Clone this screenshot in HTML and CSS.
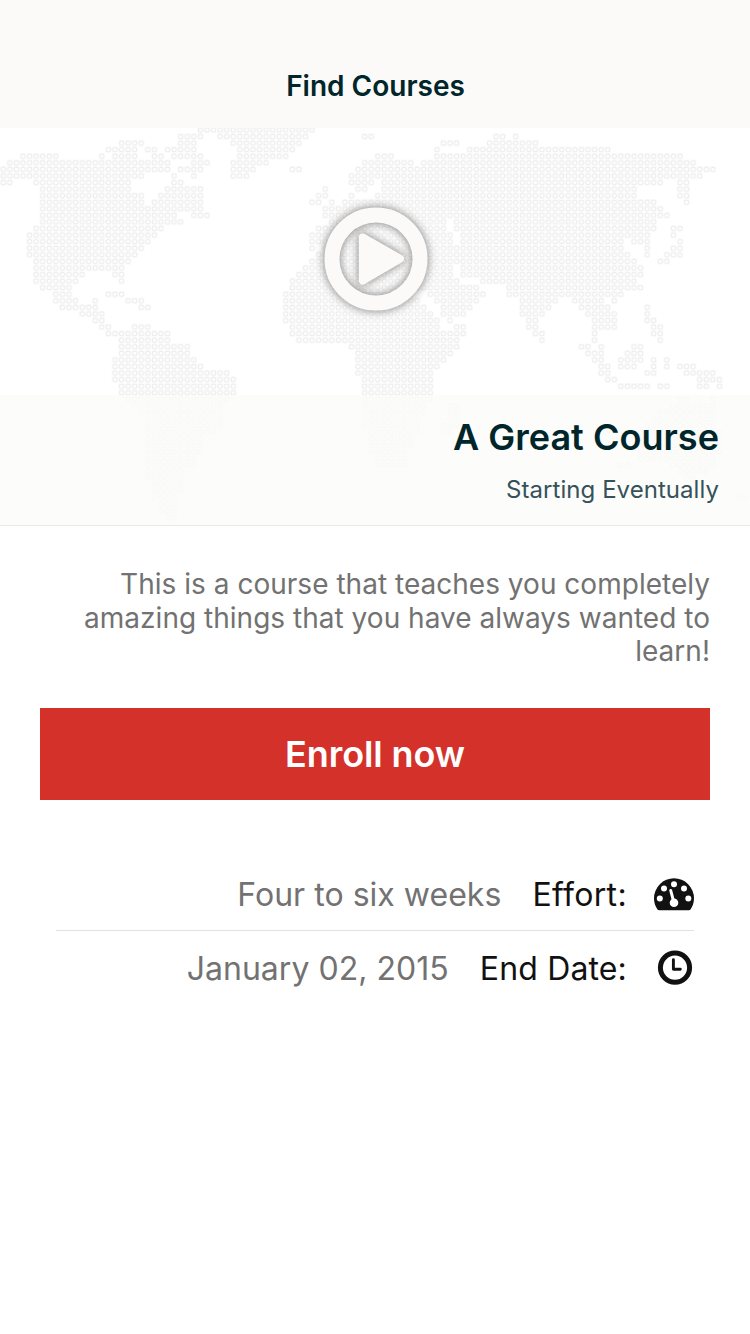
FILE: index.html
```html
<!DOCTYPE html>
<html lang="en">
<head>
<meta charset="utf-8">
<title>Find Courses</title>
<link rel="stylesheet" href="styles.css">
</head>
<body>
<header class="navbar"><h1 class="navbar-title">Find Courses</h1></header>
<section class="hero">
  <svg class="map" width="750" height="398" viewBox="0 0 750 398" aria-hidden="true">
    <defs>
      <pattern id="dot" width="6.57" height="6.57" patternUnits="userSpaceOnUse" patternTransform="translate(0 -1.3)">
        <rect width="6.57" height="6.57" fill="#fdfdfd"/>
        <circle cx="3.28" cy="3.28" r="2.2" fill="#fefefe" stroke="#ededed" stroke-width="1"/>
      </pattern>
    </defs>
    <path id="land" fill="url(#dot)"/>
  </svg>
  <svg class="play" width="130" height="130" viewBox="-65 -65 130 130" role="img" aria-label="Play">
    <circle r="44" fill="none" stroke="#fbfaf8" stroke-width="15"/>
    <path d="M-13.2 -21.5L24 -.2L-13.2 21.5Z" fill="#fbfaf8" stroke="#fbfaf8" stroke-width="8" stroke-linejoin="round"/>
  </svg>
  <div class="caption">
    <h2 class="course-title">A Great Course</h2>
    <p class="course-start">Starting Eventually</p>
  </div>
</section>
<main class="content">
  <p class="blurb">This is a course that teaches you completely amazing things that you have always wanted to learn!</p>
  <button class="enroll" type="button">Enroll now</button>
  <ul class="facts">
    <li class="fact">
      <span class="value">Four to six weeks</span><span class="label">Effort:</span>
      <svg class="icon" width="42" height="42" viewBox="0 0 42 42" aria-hidden="true">
        <path d="M4.5 35.5C2.4 32.3 1 29 1 24.3A20 20 0 0 1 41 24.3C41 29 39.6 32.3 37.5 35.5Q37 36.3 35.7 36.3H6.3Q5 36.3 4.5 35.5Z" fill="#111"/>
        <g fill="#fff"><circle cx="6.8" cy="24.4" r="3"/><circle cx="11" cy="14.4" r="3"/><circle cx="21" cy="10.2" r="3"/><circle cx="31" cy="14.4" r="3"/><circle cx="35.3" cy="24.4" r="3"/><circle cx="21" cy="28.7" r="4.3"/></g>
        <path d="M17.7 16.5L20.8 28" stroke="#fff" stroke-width="2.9" stroke-linecap="round"/>
      </svg>
    </li>
    <li class="fact">
      <span class="value">January 02, 2015</span><span class="label date-label">End Date:</span>
      <svg class="icon" width="42" height="42" viewBox="0 0 42 42" aria-hidden="true">
        <circle cx="22" cy="19.7" r="14.6" fill="none" stroke="#111" stroke-width="5"/>
        <path d="M20.4 11.8V21.3H27.3" fill="none" stroke="#111" stroke-width="2.9" stroke-linecap="round" stroke-linejoin="round"/>
      </svg>
    </li>
  </ul>
</main>
<script src="map.js"></script>
</body>
</html>
```
FILE: styles.css
```css
* { box-sizing: border-box; }
body { margin: 0; background: #fff; font-family: Inter, "Liberation Sans", sans-serif; color: #111; }
h1, h2, p, ul { margin: 0; padding: 0; }
.navbar { height: 128px; padding-top: 69px; background: #fbfaf8; text-align: center; }
.navbar-title { padding-left: 1px; font-size: 28px; line-height: 34px; font-weight: 600; color: #00262b; }
.hero { position: relative; height: 398px; display: flex; flex-direction: column; justify-content: flex-end; overflow: hidden; }
.map { position: absolute; inset: 0; }
.play { position: absolute; left: 310.5px; top: 66px; filter: drop-shadow(0 0 5px rgba(0,0,0,.5)); }
.caption { position: relative; height: 131px; padding: 20px 31px 0 0; text-align: right; background: rgba(251,251,249,.8); border-bottom: 1px solid #e9eaea; }
.course-title { font-size: 36px; line-height: 44px; font-weight: 600; letter-spacing: .03px; color: #00262b; }
.course-start { margin-top: 16px; font-size: 24px; line-height: 29px; letter-spacing: .05px; color: #35525a; }
.content { padding: 42px 40px 0; }
.blurb { font-size: 28px; line-height: 33.5px; letter-spacing: .02px; color: #727272; text-align: right; }
.enroll { display: block; width: 670px; height: 92px; margin-top: 39px; padding: 0; border: 0; background: #d3312a; color: #fff; font: 600 36px/44px Inter, sans-serif; letter-spacing: -.1px; }
.facts { list-style: none; margin: 57px 16px 0; }
.fact { display: flex; justify-content: flex-end; align-items: center; height: 75px; padding-top: 2px; }
.fact:first-child { height: 74px; padding-top: 3px; border-bottom: 1px solid #e2e2e2; }
.value, .label { font-size: 32px; line-height: 40px; white-space: nowrap; }
.value { color: #727272; letter-spacing: .03px; }
.label { margin-left: 31px; letter-spacing: .35px; }
.date-label { letter-spacing: .15px; }
.icon { margin: 0 -1px 0 26px; }
```
FILE: map.js
```js
// Column spans of land on the dot grid, one entry per row from the north down.
const rows = `30-47
27-30 33-46 55-56 75-76 78
18-21 27-29 35-45 67-69 74-81
16-20 22-23 25-29 36-44 66 71-92
3-8 15 17-20 23-24 26-30 36-43 57-59 66-103
1-25 29-31 35-40 55-62 64-105
0-25 27-30 35-38 44-45 54-108
0-21 26 29 35-37 53-106
0-1 5-19 26-27 53-56 58-100 103-104
6-19 25-30 49 54-55 58-96 103-104
6-21 24-30 48-49 53 57-96 103-104
6-21 23-30 47-48 50 52-99 104
6-30 49-100
6-26 29-31 49-101
6-27 50-67 69-99
5-24 48-67 69-99 102-103
4-23 47-68 70-98 102
4-22 47-68 70-94 96-98 103
4-21 47 49-94 98 102-103
4-20 48-95 98 101-103
5-19 47-96 100-101
5-18 46-68 70-97
5-12 17-18 45-68 70-97
5-11 18 44-69 73-96
6-10 44-72 77-97
8-10 16-18 43-62 65-73 77-94
8-11 14 19-21 43-63 66-72 79-84 87-91 93
9-14 21-22 43-64 67-71 79-83 88-92 98
12-15 43-65 67-70 79-82 89-93 98
14-15 43-66 68 80-81 90-93 98-99
15-16 20-22 44-66 69-70 80-81 90-93 99-100
16-25 44-70 81-82 90 99-100
18-25 45-69 82 90 100
18-28 53-69 88-89 91 96-97
18-28 54-68 89-91 95-97
17-29 54-67 90-91 94-97 99 101
17-30 54-66 91-92 94-96 99 101 103-105
17-34 54-65 91-92 98-99 104-108
17-35 55-65 92-93 106-109
18-35 55-65 94-98 100-101 106-107 109
18-35 55-65
19-34 55-65 103-104 108
20-33 55-64 68-69 102-108
21-33 55-64 68-69 100-108
22-33 55-63 68-69 99-108
22-33 55-63 67-69 98-108
22-32 56-63 67-68 97-109
22-30 56-62 97-109
22-30 56-62 97-109
22-30 56-61 97-109
22-29 57-61 97-108
22-29 57-61 94-95 102-108
22-27 103-107
22-27 104-105
23-27
23-27
23-26 112-113
24-26
24-26
25-26`.split("\n");
const cell = 6.57;
document.getElementById("land").setAttribute("d", rows.map((row, r) =>
  row.split(" ").map(span => {
    const [a, b = a] = span.split("-").map(Number);
    const w = (b - a + 1) * cell;
    return `M${(a * cell).toFixed(2)} ${(r * cell - 1.3).toFixed(2)}h${w.toFixed(2)}v${cell}h${(-w).toFixed(2)}z`;
  }).join("")).join(""));
```
